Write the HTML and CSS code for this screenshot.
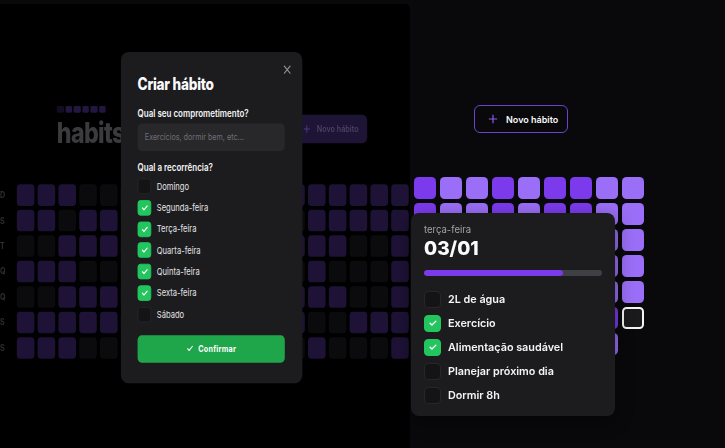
FILE: index.html
```html
<!DOCTYPE html>
<html lang="pt-BR">
<head>
<meta charset="utf-8">
<title>habits</title>
<link rel="stylesheet" href="styles.css">
</head>
<body>
<main class="stage">
  <section class="left-pane">
    <div class="lp-inner">
      <header class="lp-header">
        <div class="lp-logo">
          <div class="lp-squares"><span class="sq sq0"></span><span class="sq"></span><span class="sq"></span><span class="sq"></span><span class="sq"></span><span class="sq"></span></div>
          <div class="lp-word">habits</div>
        </div>
        <button class="lp-new" type="button">
          <svg class="lp-plus" viewBox="0 0 12 12"><path d="M6 1v10M1 6h10"/></svg>
          <span>Novo hábito</span>
        </button>
      </header>

      <div class="lp-table">
        <div class="lp-labels"><span>D</span><span>S</span><span>T</span><span>Q</span><span>Q</span><span>S</span><span>S</span></div>
        <div class="lp-grid">
          <!-- D -->
          <span class="c on"></span><span class="c on"></span><span class="c on"></span><span class="c"></span><span class="c"></span>
          <span class="c on"></span><span class="c"></span><span class="c on"></span><span class="c on"></span><span class="c"></span><span class="c on"></span><span class="c on"></span><span class="c"></span><span class="c on"></span>
          <span class="c on"></span><span class="c on"></span><span class="c on"></span><span class="c on"></span><span class="c on"></span>
          <!-- S -->
          <span class="c on"></span><span class="c on"></span><span class="c"></span><span class="c on"></span><span class="c on"></span>
          <span class="c"></span><span class="c on"></span><span class="c on"></span><span class="c"></span><span class="c on"></span><span class="c"></span><span class="c on"></span><span class="c on"></span><span class="c"></span>
          <span class="c on"></span><span class="c on"></span><span class="c on"></span><span class="c on"></span><span class="c on"></span>
          <!-- T -->
          <span class="c"></span><span class="c"></span><span class="c on"></span><span class="c on"></span><span class="c on"></span>
          <span class="c on"></span><span class="c on"></span><span class="c"></span><span class="c on"></span><span class="c"></span><span class="c on"></span><span class="c on"></span><span class="c"></span><span class="c on"></span>
          <span class="c on"></span><span class="c on"></span><span class="c"></span><span class="c"></span><span class="c on"></span>
          <!-- Q -->
          <span class="c on"></span><span class="c on"></span><span class="c on"></span><span class="c"></span><span class="c"></span>
          <span class="c"></span><span class="c on"></span><span class="c on"></span><span class="c on"></span><span class="c"></span><span class="c"></span><span class="c on"></span><span class="c on"></span><span class="c"></span>
          <span class="c on"></span><span class="c"></span><span class="c"></span><span class="c"></span><span class="c on"></span>
          <!-- Q -->
          <span class="c"></span><span class="c"></span><span class="c on"></span><span class="c on"></span><span class="c on"></span>
          <span class="c on"></span><span class="c"></span><span class="c"></span><span class="c on"></span><span class="c on"></span><span class="c on"></span><span class="c"></span><span class="c on"></span><span class="c on"></span>
          <span class="c on"></span><span class="c on"></span><span class="c"></span><span class="c"></span><span class="c on"></span>
          <!-- S -->
          <span class="c on"></span><span class="c on"></span><span class="c on"></span><span class="c on"></span><span class="c on"></span>
          <span class="c on"></span><span class="c on"></span><span class="c"></span><span class="c on"></span><span class="c on"></span><span class="c"></span><span class="c on"></span><span class="c"></span><span class="c on"></span>
          <span class="c"></span><span class="c"></span><span class="c on"></span><span class="c on"></span><span class="c on"></span>
          <!-- S -->
          <span class="c on"></span><span class="c on"></span><span class="c on"></span><span class="c"></span><span class="c"></span>
          <span class="c"></span><span class="c on"></span><span class="c on"></span><span class="c"></span><span class="c"></span><span class="c on"></span><span class="c on"></span><span class="c"></span><span class="c"></span>
          <span class="c on"></span><span class="c"></span><span class="c"></span><span class="c"></span><span class="c on"></span>
        </div>
      </div>

      <div class="modal" role="dialog">
        <svg class="modal-close" viewBox="0 0 10 10"><path d="M1 1l8 8M9 1l-8 8"/></svg>
        <h1 class="modal-title">Criar hábito</h1>
        <label class="modal-label">Qual seu comprometimento?</label>
        <div class="modal-input">Exercícios, dormir bem, etc...</div>
        <div class="modal-label modal-label2">Qual a recorrência?</div>
        <ul class="week">
          <li class="week-row"><span class="mbox"></span>Domingo</li>
          <li class="week-row"><span class="mbox on"><svg viewBox="0 0 24 24"><path d="M5 12.5l4.5 4.5L19 7.5"/></svg></span>Segunda-feira</li>
          <li class="week-row"><span class="mbox on"><svg viewBox="0 0 24 24"><path d="M5 12.5l4.5 4.5L19 7.5"/></svg></span>Terça-feira</li>
          <li class="week-row"><span class="mbox on"><svg viewBox="0 0 24 24"><path d="M5 12.5l4.5 4.5L19 7.5"/></svg></span>Quarta-feira</li>
          <li class="week-row"><span class="mbox on"><svg viewBox="0 0 24 24"><path d="M5 12.5l4.5 4.5L19 7.5"/></svg></span>Quinta-feira</li>
          <li class="week-row"><span class="mbox on"><svg viewBox="0 0 24 24"><path d="M5 12.5l4.5 4.5L19 7.5"/></svg></span>Sexta-feira</li>
          <li class="week-row"><span class="mbox"></span>Sábado</li>
        </ul>
        <button class="confirm" type="button">
          <svg viewBox="0 0 24 24"><path d="M4 12.5l5 5L20 6.5"/></svg>
          <span>Confirmar</span>
        </button>
      </div>
    </div>
  </section>

  <section class="right-pane">
    <button class="new-btn" type="button">
      <svg class="new-plus" viewBox="0 0 12 12"><path d="M6 1v10M1 6h10"/></svg>
      <span>Novo hábito</span>
    </button>

    <div class="rp-grid">
      <span class="d dk"></span><span class="d lt"></span><span class="d lt"></span><span class="d dk"></span><span class="d lt"></span><span class="d dk"></span><span class="d dk"></span><span class="d lt"></span><span class="d lt"></span>
      <span class="d dk"></span><span class="d lt"></span><span class="d lt"></span><span class="d dk"></span><span class="d lt"></span><span class="d dk"></span><span class="d dk"></span><span class="d lt"></span><span class="d lt"></span>
      <span class="d dk"></span><span class="d lt"></span><span class="d dk"></span><span class="d lt"></span><span class="d dk"></span><span class="d lt"></span><span class="d lt"></span><span class="d lt"></span><span class="d lt"></span>
      <span class="d lt"></span><span class="d dk"></span><span class="d lt"></span><span class="d dk"></span><span class="d lt"></span><span class="d dk"></span><span class="d dk"></span><span class="d lt"></span><span class="d lt"></span>
      <span class="d dk"></span><span class="d lt"></span><span class="d dk"></span><span class="d lt"></span><span class="d lt"></span><span class="d dk"></span><span class="d lt"></span><span class="d lt"></span><span class="d lt"></span>
      <span class="d lt"></span><span class="d dk"></span><span class="d lt"></span><span class="d dk"></span><span class="d dk"></span><span class="d lt"></span><span class="d dk"></span><span class="d dk"></span><span class="d today"></span>
      <span class="d dk"></span><span class="d lt"></span><span class="d dk"></span><span class="d lt"></span><span class="d dk"></span><span class="d lt"></span><span class="d dk"></span><span class="d lt"></span><span class="d none"></span>
    </div>

    <div class="popover">
      <div class="pv-day">terça-feira</div>
      <div class="pv-date">03/01</div>
      <div class="pv-bar"><div class="pv-fill" style="width:78%"></div></div>
      <ul class="pv-list">
        <li class="pv-row"><span class="pbox"></span>2L de água</li>
        <li class="pv-row"><span class="pbox on"><svg viewBox="0 0 24 24"><path d="M5 12.5l4.5 4.5L19 7.5"/></svg></span>Exercício</li>
        <li class="pv-row"><span class="pbox on"><svg viewBox="0 0 24 24"><path d="M5 12.5l4.5 4.5L19 7.5"/></svg></span>Alimentação saudável</li>
        <li class="pv-row"><span class="pbox"></span>Planejar próximo dia</li>
        <li class="pv-row"><span class="pbox"></span>Dormir 8h</li>
      </ul>
    </div>
  </section>
</main>
</body>
</html>
```

FILE: styles.css
```css
* { box-sizing: border-box; }

html, body {
  margin: 0;
  padding: 0;
}

body {
  width: 725px;
  height: 448px;
  overflow: hidden;
  background: #09090b;
  font-family: Inter, "Noto Sans", "Liberation Sans", sans-serif;
  color: #fafafa;
}

.stage {
  display: flex;
  height: 448px;
}

/* ---------- left pane (squeezed view with modal) ---------- */
.left-pane {
  flex: 0 0 410px;
  height: 444px;
  margin-top: 4px;
  background: #000;
  border-top-right-radius: 5px;
  overflow: hidden;
}

.lp-inner {
  position: relative;
  width: 512px;
  height: 453px;
  padding-top: 104px;
  transform: scale(0.8, 0.98);
  transform-origin: 0 0;
}

.lp-header {
  display: flex;
  justify-content: space-between;
  align-items: flex-start;
  width: 388px;
  margin-left: 71px;
}

.lp-squares {
  display: flex;
  gap: 2px;
}

.sq {
  width: 8.5px;
  height: 7px;
  border-radius: 1.5px;
  background: #231640;
}

.sq0 { background: #130c22; }

.lp-word {
  margin-top: 7px;
  font-size: 29px;
  line-height: 28px;
  font-weight: 800;
  letter-spacing: -0.8px;
  color: #3b3b3e;
}

.lp-new {
  display: flex;
  align-items: center;
  gap: 8px;
  width: 94px;
  height: 29px;
  margin-top: 9px;
  padding: 0 0 0 14px;
  border: 0;
  border-radius: 6px;
  background: #1e1436;
  color: #4a4163;
  font-family: inherit;
  font-size: 9px;
  font-weight: 600;
}

.lp-plus {
  width: 9px;
  height: 9px;
  fill: none;
  stroke: #4a3a7c;
  stroke-width: 1.5;
}

.lp-table {
  display: flex;
  margin-top: 38px;
}

.lp-labels {
  display: flex;
  flex-direction: column;
  gap: 4px;
  width: 21px;
}

.lp-labels span {
  height: 22px;
  line-height: 22px;
  font-size: 9px;
  font-weight: 700;
  color: #2e2e32;
}

.lp-grid {
  display: grid;
  grid-template-columns: repeat(19, 22px);
  grid-auto-rows: 22px;
  gap: 4px;
}

.c {
  border-radius: 4px;
  background: #0b0b0d;
}

.c.on { background: #1e1237; }

/* modal */
.modal {
  position: absolute;
  left: 151px;
  top: 49px;
  width: 227px;
  padding: 21px 22px 21px 21px;
  border-radius: 9px;
  background: #1c1c1f;
}

.modal-close {
  position: absolute;
  right: 14px;
  top: 13px;
  width: 10px;
  height: 10px;
  fill: none;
  stroke: #8f8f97;
  stroke-width: 1.3;
}

.modal-title {
  margin: 2px 0 0;
  font-size: 17px;
  line-height: 20px;
  font-weight: 800;
  letter-spacing: -0.3px;
  color: #fafafa;
}

.modal-label {
  display: block;
  margin-top: 13px;
  font-size: 10px;
  line-height: 12px;
  font-weight: 600;
  color: #f4f4f5;
}

.modal-label2 { margin-top: 10px; }

.modal-input {
  height: 28px;
  margin-top: 5px;
  padding-left: 9px;
  border-radius: 5px;
  background: #28282b;
  font-size: 9px;
  line-height: 28px;
  color: #6f6f77;
}

.week {
  list-style: none;
  margin: 6px 0 0;
  padding: 0;
  display: flex;
  flex-direction: column;
  gap: 5.8px;
}

.week-row {
  display: flex;
  align-items: center;
  height: 16px;
  font-size: 9.5px;
  color: #e4e4e7;
}

.mbox {
  display: flex;
  align-items: center;
  justify-content: center;
  width: 17px;
  height: 16px;
  margin-right: 7px;
  border-radius: 3.5px;
  background: #141417;
  border: 1px solid #26262a;
}

.mbox.on {
  background: #22c55e;
  border-color: #22c55e;
}

.mbox svg, .pbox svg {
  width: 10px;
  height: 10px;
  fill: none;
  stroke: #fff;
  stroke-width: 3.2;
  stroke-linecap: round;
  stroke-linejoin: round;
}

.confirm {
  display: flex;
  align-items: center;
  justify-content: center;
  gap: 6px;
  width: 100%;
  height: 28px;
  margin-top: 13px;
  border: 0;
  border-radius: 5px;
  background: #1fa64b;
  color: #fff;
  font-family: inherit;
  font-size: 9px;
  font-weight: 700;
  letter-spacing: 0.3px;
}

.confirm svg {
  width: 9px;
  height: 9px;
  fill: none;
  stroke: #fff;
  stroke-width: 3;
  stroke-linecap: round;
  stroke-linejoin: round;
}

/* ---------- right pane ---------- */
.right-pane {
  position: relative;
  flex: 1;
  padding-top: 105px;
}

.new-btn {
  display: flex;
  align-items: center;
  gap: 8px;
  width: 94px;
  height: 28px;
  margin-left: 64px;
  padding: 0 0 0 13px;
  border: 1px solid #6a44c9;
  border-radius: 6px;
  background: transparent;
  color: #fafafa;
  font-family: inherit;
  font-size: 9px;
  font-weight: 600;
}

.new-plus {
  width: 10px;
  height: 10px;
  fill: none;
  stroke: #8b5cf6;
  stroke-width: 1.4;
}

.rp-grid {
  display: grid;
  grid-template-columns: repeat(9, 22px);
  grid-auto-rows: 22px;
  gap: 4px;
  margin: 44px 0 0 4px;
}

.d { border-radius: 4.5px; }
.d.dk { background: #7c3aed; }
.d.lt { background: #9a6ef6; }
.d.today {
  background: #1a1a1d;
  border: 2px solid #f4f4f5;
}
.d.none { background: transparent; }

.popover {
  position: absolute;
  left: 1px;
  top: 213px;
  width: 204px;
  padding: 10.5px 13px 12px;
  border-radius: 8px;
  background: #1c1c1f;
  box-shadow: 0 6px 18px rgba(0, 0, 0, 0.45);
}

.pv-day {
  font-size: 9.5px;
  line-height: 12px;
  color: #a1a1aa;
}

.pv-date {
  margin-top: 1px;
  font-size: 19px;
  line-height: 23px;
  font-weight: 800;
  color: #fafafa;
}

.pv-bar {
  height: 6.5px;
  margin-top: 10px;
  border-radius: 4px;
  background: #3f3f46;
  overflow: hidden;
}

.pv-fill {
  height: 100%;
  border-radius: 4px;
  background: #7c3aed;
}

.pv-list {
  list-style: none;
  margin: 14.5px 0 0;
  padding: 0;
  display: flex;
  flex-direction: column;
  gap: 7px;
}

.pv-row {
  display: flex;
  align-items: center;
  height: 17px;
  font-size: 10.8px;
  font-weight: 600;
  color: #f4f4f5;
}

.pbox {
  display: flex;
  align-items: center;
  justify-content: center;
  width: 17px;
  height: 17px;
  margin-right: 7px;
  border-radius: 4px;
  background: #141417;
  border: 1px solid #27272b;
}

.pbox.on {
  background: #22c55e;
  border-color: #22c55e;
}
```
